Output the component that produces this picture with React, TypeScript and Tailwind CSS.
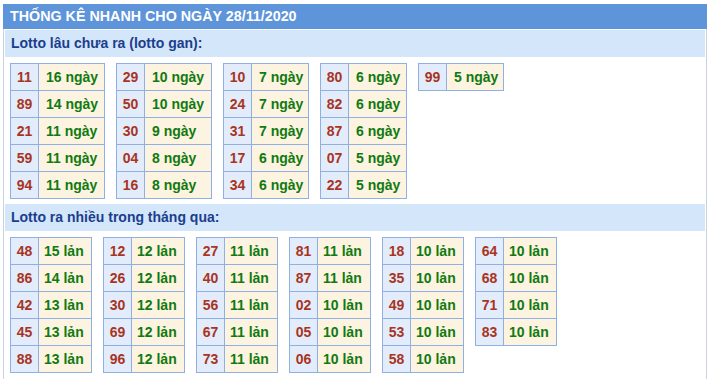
const GAN: [string, string][][] = [
  [['11', '16 ngày'], ['89', '14 ngày'], ['21', '11 ngày'], ['59', '11 ngày'], ['94', '11 ngày']],
  [['29', '10 ngày'], ['50', '10 ngày'], ['30', '9 ngày'], ['04', '8 ngày'], ['16', '8 ngày']],
  [['10', '7 ngày'], ['24', '7 ngày'], ['31', '7 ngày'], ['17', '6 ngày'], ['34', '6 ngày']],
  [['80', '6 ngày'], ['82', '6 ngày'], ['87', '6 ngày'], ['07', '5 ngày'], ['22', '5 ngày']],
  [['99', '5 ngày']],
]
const GAN_W = ['w-[66px]', 'w-[67px]', 'w-[57px]', 'w-[58px]', 'w-[57px]']

const NHIEU: [string, string][][] = [
  [['48', '15 lản'], ['86', '14 lản'], ['42', '13 lản'], ['45', '13 lản'], ['88', '13 lản']],
  [['12', '12 lản'], ['26', '12 lản'], ['30', '12 lản'], ['69', '12 lản'], ['96', '12 lản']],
  [['27', '11 lản'], ['40', '11 lản'], ['56', '11 lản'], ['67', '11 lản'], ['73', '11 lản']],
  [['81', '11 lản'], ['87', '11 lản'], ['02', '10 lản'], ['05', '10 lản'], ['06', '10 lản']],
  [['18', '10 lản'], ['35', '10 lản'], ['49', '10 lản'], ['53', '10 lản'], ['58', '10 lản']],
  [['64', '10 lản'], ['68', '10 lản'], ['71', '10 lản'], ['83', '10 lản']],
]

function StatTable({ rows, valueW, pad }: { rows: [string, string][]; valueW: string; pad: string }) {
  return (
    <div className="border-t border-l border-[#8fb0e2]">
      {rows.map(([num, val]) => (
        <div key={num} className="flex h-[27px]">
          <div className="w-[28px] flex items-center justify-center bg-[#e2ecfb] border-r border-b border-[#8fb0e2] text-[#a8341f]">
            {num}
          </div>
          <div className={`${valueW} ${pad} flex items-center bg-[#fdf3e1] border-r border-b border-[#8fb0e2] text-[#107a10] whitespace-nowrap`}>
            {val}
          </div>
        </div>
      ))}
    </div>
  )
}

function SectionTitle({ children }: { children: string }) {
  return (
    <div className="h-[27px] ml-[1px] mr-[1px] pl-[6px] flex items-center bg-[#d4e6fa] text-[#1b3e8c] font-bold text-[14px]">
      {children}
    </div>
  )
}

export default function App() {
  return (
    <div className="w-[710px] h-[379px] overflow-hidden bg-white font-['Liberation_Sans',Arial,sans-serif]">
      <div className="ml-[3px] mt-[4px] w-[704px] h-[400px] border-x border-[#c9d2de]">
        <div className="-ml-[1px] -mr-[1px] h-[25px] pl-[7px] flex items-center bg-[#5e94da] text-white font-bold text-[14.3px]">
          THỐNG KÊ NHANH CHO NGÀY 28/11/2020
        </div>
        <div className="mt-[1px]">
          <SectionTitle>Lotto lâu chưa ra (lotto gan):</SectionTitle>
        </div>

        <div className="mt-[6px] pl-[6px] flex items-start gap-[11px] font-bold text-[14px]">
          {GAN.map((rows, i) => (
            <StatTable key={i} rows={rows} valueW={GAN_W[i]} pad="pl-[7px]" />
          ))}
        </div>

        <div className="mt-[5px]">
          <SectionTitle>Lotto ra nhiều trong tháng qua:</SectionTitle>
        </div>

        <div className="mt-[6px] pl-[6px] flex items-start gap-[11px] font-bold text-[14px]">
          {NHIEU.map((rows, i) => (
            <StatTable key={i} rows={rows} valueW="w-[53px]" pad="pl-[5px]" />
          ))}
        </div>
      </div>
    </div>
  )
}
